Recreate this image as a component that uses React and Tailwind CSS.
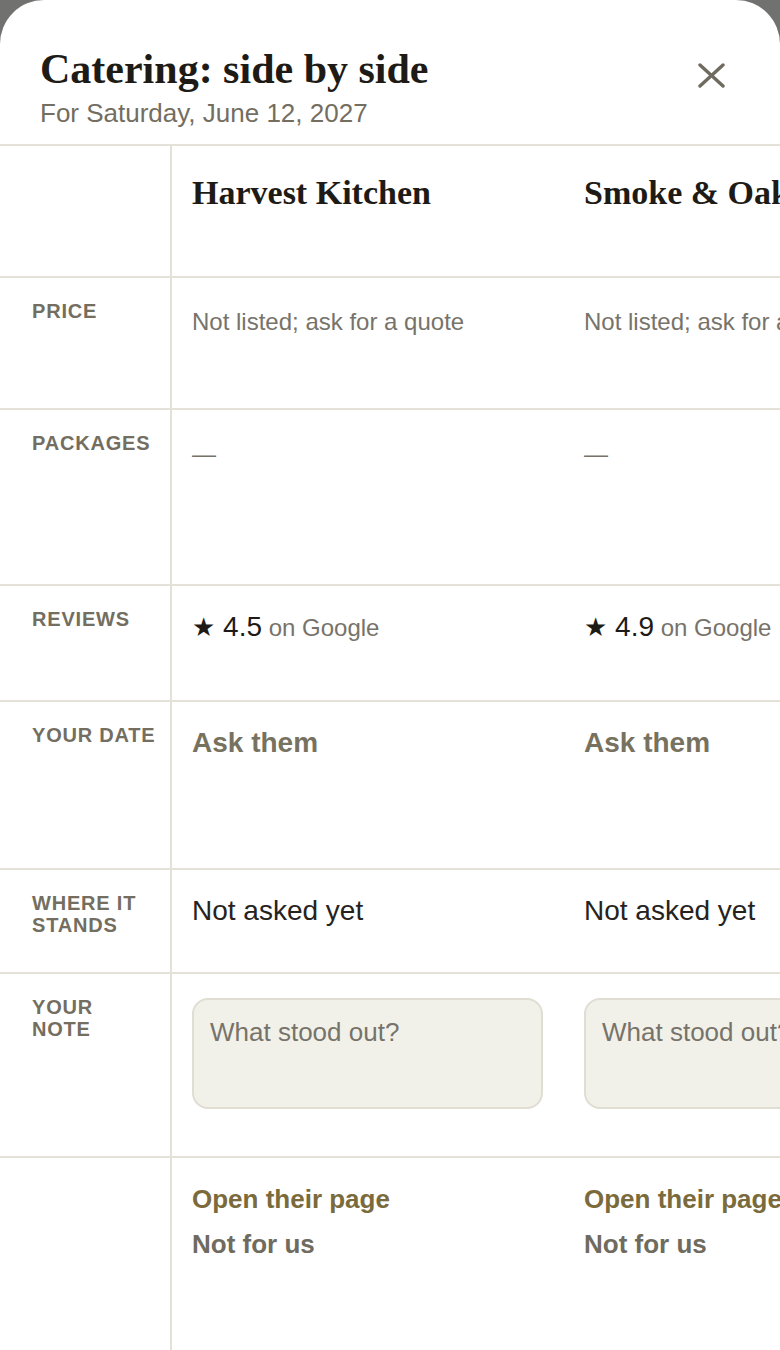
import React from "react";

const vendors = [
  { name: "Harvest Kitchen", price: "Not listed; ask for a quote", rating: "4.5" },
  { name: "Smoke & Oak", price: "Not listed; ask for a quote", rating: "4.9" },
];

const serif = "font-['Liberation_Serif','Times_New_Roman',serif]";

function Row({ label, height, render, last = false }) {
  return (
    <div className={`flex ${height} ${last ? "" : "border-b-2 border-[#e3e1d8]"}`}>
      <div className="w-[172px] shrink-0 border-r-2 border-[#e3e1d8] pl-8 pr-2 pt-[22px]">
        {label && (
          <div className="whitespace-pre-line text-[20px] font-bold uppercase leading-[22px] tracking-[0.04em] text-[#736e60]">
            {label}
          </div>
        )}
      </div>
      {vendors.map((v) => (
        <div key={v.name} className="w-[392px] shrink-0 px-5 pt-[22px]">
          {render(v)}
        </div>
      ))}
    </div>
  );
}

export default function App() {
  return (
    <div className="min-h-screen bg-[#717170] font-['Liberation_Sans',Arial,sans-serif]">
      <div className="flex h-[1350px] flex-col overflow-hidden rounded-t-[44px] bg-white">
        {/* Header */}
        <div className="flex h-[144px] shrink-0 items-start justify-between pl-10 pr-[55px] pt-[48px]">
          <div>
            <h1 className={`${serif} text-[42px] font-bold leading-[42px] text-[#1e1b16]`}>
              Catering: side by side
            </h1>
            <p className="mt-2 text-[26px] leading-[30px] text-[#736e60]">For Saturday, June 12, 2027</p>
          </div>
          <button className="mt-[15px]" aria-label="Close">
            <svg width="27" height="25" viewBox="0 0 27 25" fill="none" stroke="#6f6b5f" strokeWidth="3.4" strokeLinecap="round">
              <path d="M2 2L25 23" />
              <path d="M25 2L2 23" />
            </svg>
          </button>
        </div>

        {/* Comparison table */}
        <div className="flex flex-1 flex-col border-t-2 border-[#e3e1d8]">
          <Row
            height="h-[132px]"
            render={(v) => (
              <div className={`${serif} mt-[8px] text-[34px] font-bold leading-[34px] whitespace-nowrap text-[#1e1b16]`}>
                {v.name}
              </div>
            )}
          />
          <Row
            label="Price"
            height="h-[132px]"
            render={(v) => (
              <div className="mt-1 text-[24px] leading-[36px] whitespace-nowrap text-[#77736a]">{v.price}</div>
            )}
          />
          <Row
            label="Packages"
            height="h-[176px]"
            render={() => <div className="mt-1 text-[24px] leading-[36px] text-[#77736a]">—</div>}
          />
          <Row
            label="Reviews"
            height="h-[116px]"
            render={(v) => (
              <div className="mt-px whitespace-nowrap leading-[36px] text-[#1e1b16]">
                <span className="font-['DejaVu_Sans',sans-serif] text-[26px]">★</span>
                <span className="text-[28px]"> {v.rating}</span>
                <span className="text-[24px] text-[#77736a]"> on Google</span>
              </div>
            )}
          />
          <Row
            label="Your date"
            height="h-[168px]"
            render={() => (
              <div className="mt-px text-[28px] font-bold leading-[36px] text-[#77725f]">Ask them</div>
            )}
          />
          <Row
            label="Where it stands"
            height="h-[104px]"
            render={() => <div className="mt-px text-[28px] leading-[36px] text-[#26231e]">Not asked yet</div>}
          />
          <Row
            label={"Your\nnote"}
            height="h-[184px]"
            render={() => (
              <textarea
                placeholder="What stood out?"
                className="mt-[2px] block h-[111px] w-[351px] resize-none rounded-[16px] border-2 border-[#e0ddd2] bg-[#f1f1e9] px-4 pt-[14px] text-[26px] leading-[36px] text-[#26231e] placeholder:text-[#77736a] focus:outline-none"
              />
            )}
          />
          <Row
            last
            height="flex-1"
            render={() => (
              <div className="flex flex-col gap-[9px] pt-px text-[26px] font-bold leading-[36px]">
                <a className="whitespace-nowrap text-[#7a6a3c]">Open their page</a>
                <button className="text-left whitespace-nowrap text-[#6f6b5e]">Not for us</button>
              </div>
            )}
          />
        </div>
      </div>
    </div>
  );
}
